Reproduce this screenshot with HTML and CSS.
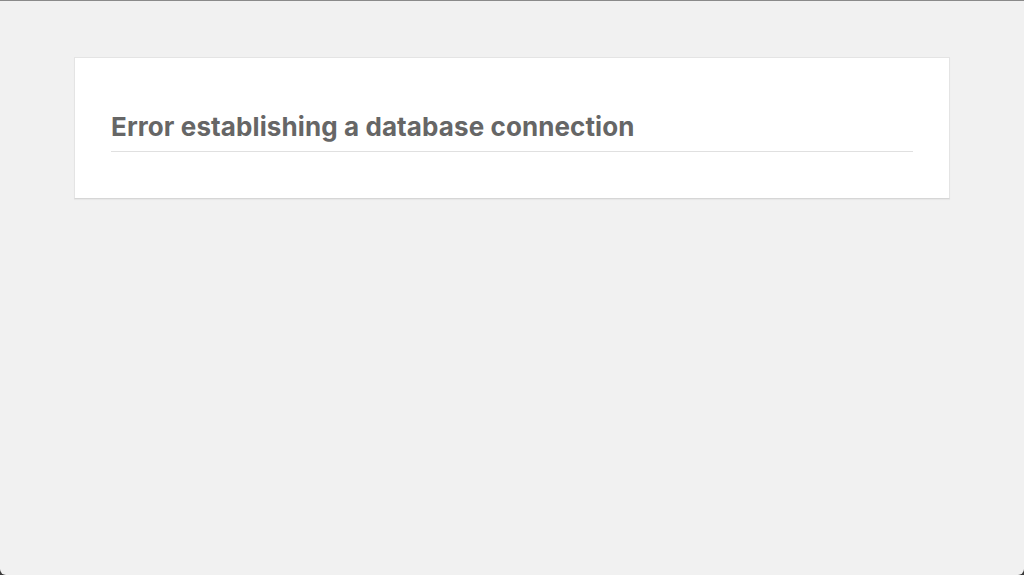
FILE: index.html
```html
<!DOCTYPE html>
<html lang="en">
<head>
<meta charset="utf-8">
<title>Database Error</title>
<link rel="stylesheet" href="styles.css">
</head>
<body>
<div class="window">
  <div class="card">
    <h1 class="title">Error establishing a database connection</h1>
  </div>
</div>
</body>
</html>
```

FILE: styles.css
```css
html, body {
  margin: 0;
  padding: 0;
  height: 100%;
  background: #3a3a3a;
}
.window {
  box-sizing: border-box;
  height: 575px;
  background: #f1f1f1;
  border-top: 1px solid #8a8a8a;
  border-radius: 0 0 6px 6px;
  padding-top: 56px;
  font-family: Inter, "Noto Sans", sans-serif;
}
.card {
  box-sizing: border-box;
  width: 876px;
  margin: 0 auto;
  background: #fff;
  border: 1px solid #e4e4e4;
  border-bottom-color: #d6d6d6;
  box-shadow: 0 1px 1px rgba(0,0,0,0.04);
  padding: 0 36px 46px;
}
.title {
  margin: 53px 0 0;
  padding: 0 0 9px;
  font-size: 26px;
  line-height: 31px;
  font-weight: 700;
  color: #666;
  border-bottom: 1px solid #e0e0e0;
  letter-spacing: 0.1px;
}
```
